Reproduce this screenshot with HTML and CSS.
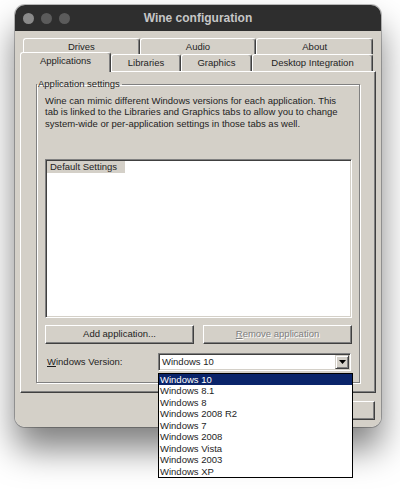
FILE: index.html
```html
<!DOCTYPE html>
<html lang="en">
<head>
    <meta charset="UTF-8">
    <meta name="viewport" content="width=device-width, initial-scale=1.0">
    <title>Wine configuration</title>
    <link rel="stylesheet" href="styles.css">
</head>
<body>
    <div class="window">
        <div class="titlebar">
            <div class="lights">
                <span class="light first"></span>
                <span class="light"></span>
                <span class="light"></span>
            </div>
            <div class="title">Wine configuration</div>
        </div>

        <div class="client">
            <div class="tabs">
                <div class="tab-row back">
                    <div class="tab">Drives</div>
                    <div class="tab">Audio</div>
                    <div class="tab">About</div>
                </div>
                <div class="tab-row front">
                    <div class="tab active tab-apps">Applications</div>
                    <div class="tab tab-libs">Libraries</div>
                    <div class="tab tab-graphics">Graphics</div>
                    <div class="tab tab-desktop">Desktop Integration</div>
                </div>
            </div>

            <div class="panel">
                <fieldset class="group">
                    <legend>Application settings</legend>
                    <p class="intro">Wine can mimic different Windows versions for each application. This<br>tab is linked to the Libraries and Graphics tabs to allow you to change<br>system-wide or per-application settings in those tabs as well.</p>

                    <div class="listbox">
                        <div class="list-item">Default Settings</div>
                    </div>

                    <div class="button-row">
                        <button class="btn">Add application...</button>
                        <button class="btn" disabled><u>R</u>emove application</button>
                    </div>

                    <div class="version-row">
                        <label class="version-label"><u>W</u>indows Version:</label>
                        <div class="combo">
                            <div class="combo-value">Windows 10</div>
                            <div class="combo-arrow">
                                <svg width="7" height="4" viewBox="0 0 7 4"><path d="M0 0h7L3.5 4z" fill="#000"/></svg>
                            </div>
                            <div class="dropdown">
                                <div class="option selected">Windows 10</div>
                                <div class="option">Windows 8.1</div>
                                <div class="option">Windows 8</div>
                                <div class="option">Windows 2008 R2</div>
                                <div class="option">Windows 7</div>
                                <div class="option">Windows 2008</div>
                                <div class="option">Windows Vista</div>
                                <div class="option">Windows 2003</div>
                                <div class="option">Windows XP</div>
                            </div>
                        </div>
                    </div>
                </fieldset>
            </div>

            <!-- OK / Cancel sit under the open dropdown, only the last button peeks out -->
            <div class="dialog-buttons">
                <button class="btn dialog-btn"></button>
                <button class="btn dialog-btn"></button>
                <button class="btn dialog-btn"></button>
            </div>
        </div>
    </div>
</body>
</html>
```

FILE: styles.css
```css
* {
    box-sizing: border-box;
    margin: 0;
    padding: 0;
}
html, body {
    min-height: 489px;
}
body {
    font-family: 'Liberation Sans', Arial, sans-serif;
    font-size: 9.5px;
    line-height: 12px;
    color: #1e1e1e;
    background-color: #fff;
    padding-top: 5px;
}
.window {
    width: 366px;
    margin-left: 15px;
    border-radius: 10px;
    box-shadow: 0 22px 34px rgba(0, 0, 0, 0.5), 0 0 0 1px rgba(0, 0, 0, 0.25);
}
.titlebar {
    height: 26px;
    display: flex;
    align-items: center;
    padding-left: 8px;
    background-color: #2e2e2e;
    border-radius: 10px 10px 0 0;
}
.lights {
    display: flex;
    gap: 7px;
}
.light {
    width: 11px;
    height: 11px;
    border-radius: 50%;
    background-color: #5b5b5b;
}
.light.first {
    background-color: #8a8a8a;
}
.title {
    flex: 1;
    margin-right: 55px;
    text-align: center;
    font-size: 12px;
    font-weight: bold;
    color: #c6c6c6;
}
.client {
    background-color: #d4d0c8;
    border-radius: 0 0 10px 10px;
    padding: 7px 5px 7px 5px;
}

/* tabs */
.tabs {
    width: 353px;
}
.tab-row {
    display: flex;
}
.tab-row.back {
    height: 16px;
    padding-left: 3px;
}
.tab-row.front {
    height: 17px;
}
.tab {
    display: flex;
    align-items: center;
    justify-content: center;
    background-color: #d4d0c8;
    border-top: 1px solid #fff;
    border-left: 1px solid #fff;
    border-right: 1px solid #404040;
    box-shadow: inset -1px 0 #808080;
    border-radius: 3px 3px 0 0;
}
.back .tab {
    flex: 1;
}
.tab-apps { width: 91px; }
.tab-libs { width: 70px; }
.tab-graphics { width: 71px; }
.tab-desktop { width: 121px; }
.tab.active {
    position: relative;
    z-index: 1;
    height: 20px;
    margin-top: -2px;
    padding-bottom: 3px;
}

/* panel + group */
.panel {
    width: 356px;
    border: 1px solid;
    border-color: #fff #404040 #404040 #fff;
    box-shadow: inset -1px -1px #808080;
    padding: 6px 15px 9px 15px;
}
.group {
    border: 1px solid #808080;
    box-shadow: inset 1px 1px #fff, 1px 1px #fff;
    padding: 0 7px 11px 8px;
}
.group legend {
    margin-left: -8px;
    padding: 0 2px 0 1px;
    line-height: 12px;
}
.intro {
    margin-top: 5px;
    line-height: 11.3px;
}
.listbox {
    height: 159px;
    margin-top: 30px;
    background-color: #fff;
    border: 1px solid;
    border-color: #808080 #fff #fff #808080;
    box-shadow: inset 1px 1px #404040, inset -1px -1px #d4d0c8;
    padding: 1px;
}
.list-item {
    display: inline-block;
    height: 12px;
    padding: 0 8px 0 3px;
    background-color: #d4d0c8;
}

/* buttons */
.button-row {
    display: flex;
    gap: 9px;
    margin-top: 7px;
}
.btn {
    flex: 1;
    height: 19px;
    font: inherit;
    color: #1e1e1e;
    background-color: #d4d0c8;
    border: 1px solid;
    border-color: #fff #404040 #404040 #fff;
    box-shadow: inset -1px -1px #808080;
}
.btn:disabled {
    color: #808080;
    text-shadow: 1px 1px #fff;
}

/* windows version combo */
.version-row {
    display: flex;
    align-items: center;
    height: 18px;
    margin-top: 9px;
}
.version-label {
    width: 113px;
    padding-left: 2px;
}
.combo {
    position: relative;
    display: flex;
    width: 193px;
    height: 18px;
    background-color: #fff;
    border: 1px solid;
    border-color: #808080 #fff #fff #808080;
    box-shadow: inset 1px 1px #404040, inset -1px -1px #d4d0c8;
    padding: 1px;
}
.combo-value {
    flex: 1;
    padding-left: 2px;
    line-height: 14px;
}
.combo-arrow {
    width: 14px;
    height: 14px;
    display: flex;
    align-items: center;
    justify-content: center;
    background-color: #d4d0c8;
    border: 1px solid;
    border-color: #d4d0c8 #404040 #404040 #d4d0c8;
    box-shadow: inset 1px 1px #fff, inset -1px -1px #808080;
}
.dropdown {
    position: absolute;
    left: -1px;
    top: 19px;
    width: 195px;
    z-index: 10;
    background-color: #fff;
    border: 1px solid #000;
}
.option {
    height: 11.5px;
    line-height: 11.5px;
    padding-left: 1px;
}
.option.selected {
    background-color: #0a246a;
    color: #fff;
}

/* dialog buttons */
.dialog-buttons {
    display: flex;
    justify-content: flex-end;
    gap: 6px;
    margin-top: 8px;
    padding-right: 1px;
}
.dialog-btn {
    flex: none;
    width: 66px;
}
```
